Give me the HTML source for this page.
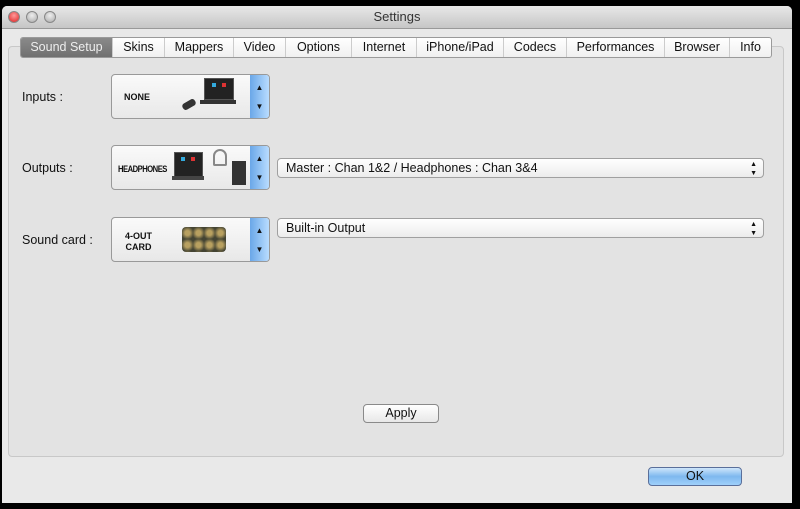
<!DOCTYPE html><html><head><style>
body{margin:0;width:800px;height:509px;background:#000;position:relative;overflow:hidden;font-family:"Liberation Sans",sans-serif;}
.a{position:absolute}
.win{left:2px;top:6px;width:790px;height:497px;background:#e9e9e9;border-radius:5px 5px 0 0}
.tb{left:0;top:0;width:790px;height:22px;background:linear-gradient(#e8e8e8,#c6c6c6);border-radius:5px 5px 0 0;border-bottom:1px solid #999;text-align:center;font-size:13px;line-height:22px;color:#333}
.dot{top:5px;width:12px;height:12px;border-radius:50%;background:radial-gradient(circle at 50% 35%,#eee,#aaa);border:1px solid #888;box-sizing:border-box}
.panel{left:8px;top:46px;width:776px;height:411px;background:#e3e3e3;border:1px solid #c8c8c8;border-radius:4px;box-sizing:border-box}
.tabs{left:20px;top:37px;height:19px;display:flex;border:1px solid #9a9a9a;border-radius:3px;background:linear-gradient(#fff,#f0f0f0);font-size:12.5px;overflow:hidden}
.tabs div{height:19px;line-height:19px;text-align:center;border-left:1px solid #ccc;box-sizing:border-box;color:#111}
.tabs div.s{background:linear-gradient(#8a8a8a,#707070);color:#eee;border:none}
.lbl{font-size:12.5px;color:#111}
.box{width:159px;height:45px;border:1px solid #999;border-radius:4px;background:linear-gradient(#fafafa,#e8e8e8);box-sizing:border-box;overflow:hidden}
.sp{right:0;top:0;width:19px;height:43px;background:linear-gradient(90deg,#6aa7e8,#b8dcff);font-size:8px;color:#111;text-align:center}
.bt{font-weight:bold;font-size:9px;color:#111}
.pop{left:277px;width:487px;height:20px;border:1px solid #a0a0a0;border-radius:4px;background:linear-gradient(#fff,#ececec);box-sizing:border-box;font-size:12.5px;line-height:18px;padding-left:8px;color:#111}
.btn{border:1px solid #8a8a8a;border-radius:4px;text-align:center;font-size:12.5px;line-height:17px;box-sizing:border-box;color:#111}
.scr{background:#222;border:1px solid #555}
.scr i{position:absolute;top:4px;width:4px;height:4px}
</style></head><body>
<div class="a win">
<div class="a tb">Settings</div>
<div class="a dot" style="left:6px;background:radial-gradient(circle at 50% 35%,#f99,#d22)"></div>
<div class="a dot" style="left:24px"></div>
<div class="a dot" style="left:42px"></div>
</div>
<div class="a panel"></div>
<div class="a tabs">
<div class="s" style="width:91px">Sound Setup</div><div style="width:52px">Skins</div><div style="width:69px">Mappers</div><div style="width:52px">Video</div><div style="width:66px">Options</div><div style="width:65px">Internet</div><div style="width:87px">iPhone/iPad</div><div style="width:63px">Codecs</div><div style="width:98px">Performances</div><div style="width:65px">Browser</div><div style="width:42px">Info</div>
</div>
<div class="a lbl" style="left:22px;top:90px">Inputs :</div>
<div class="a lbl" style="left:22px;top:161px">Outputs :</div>
<div class="a lbl" style="left:22px;top:233px">Sound card :</div>

<div class="a box" style="left:111px;top:74px">
<div class="a bt" style="left:12px;top:17px">NONE</div>
<div class="a scr" style="left:92px;top:3px;width:28px;height:20px"><i style="left:7px;background:#3ad"></i><i style="left:17px;background:#d33"></i></div>
<div class="a" style="left:88px;top:25px;width:36px;height:4px;background:#333"></div>
<div class="a" style="left:70px;top:26px;width:14px;height:7px;background:#333;border-radius:3px;transform:rotate(-30deg)"></div>
<div class="a sp"><div style="margin-top:8px">▲</div><div style="margin-top:10px">▼</div></div>
</div>
<div class="a box" style="left:111px;top:145px">
<div class="a bt" style="left:6px;top:18px;letter-spacing:-0.6px;transform:scaleX(0.85);transform-origin:left">HEADPHONES</div>
<div class="a scr" style="left:62px;top:6px;width:27px;height:24px"><i style="left:6px;background:#3ad"></i><i style="left:16px;background:#d33"></i></div>
<div class="a" style="left:60px;top:30px;width:32px;height:4px;background:#444"></div>
<div class="a" style="left:101px;top:3px;width:14px;height:17px;border:2px solid #888;border-radius:8px 8px 2px 2px;box-sizing:border-box"></div>
<div class="a" style="left:120px;top:15px;width:14px;height:24px;background:#333"></div>
<div class="a sp"><div style="margin-top:8px">▲</div><div style="margin-top:10px">▼</div></div>
</div>
<div class="a box" style="left:111px;top:217px">
<div class="a bt" style="left:13px;top:13px;text-align:center;line-height:11px">4-OUT<br>CARD</div>
<div class="a" style="left:70px;top:9px;width:44px;height:25px;background:radial-gradient(circle,#b8a060 30%,#443 80%);background-size:11px 12px;border-radius:4px"></div>
<div class="a sp"><div style="margin-top:8px">▲</div><div style="margin-top:10px">▼</div></div>
</div>
<div class="a pop" style="top:158px">Master : Chan 1&amp;2 / Headphones : Chan 3&amp;4<span style="position:absolute;right:6px;font-size:7px;line-height:9px;top:1px">▲<br>▼</span></div>
<div class="a pop" style="top:218px">Built-in Output<span style="position:absolute;right:6px;font-size:7px;line-height:9px;top:1px">▲<br>▼</span></div>
<div class="a btn" style="left:363px;top:404px;width:76px;height:19px;background:linear-gradient(#fff,#e8e8e8)">Apply</div>
<div class="a btn" style="left:648px;top:467px;width:94px;height:19px;background:linear-gradient(#cfe6fb,#7eb8ef 50%,#9fd0fa);border-color:#5a6f9a">OK</div>
</body></html>
